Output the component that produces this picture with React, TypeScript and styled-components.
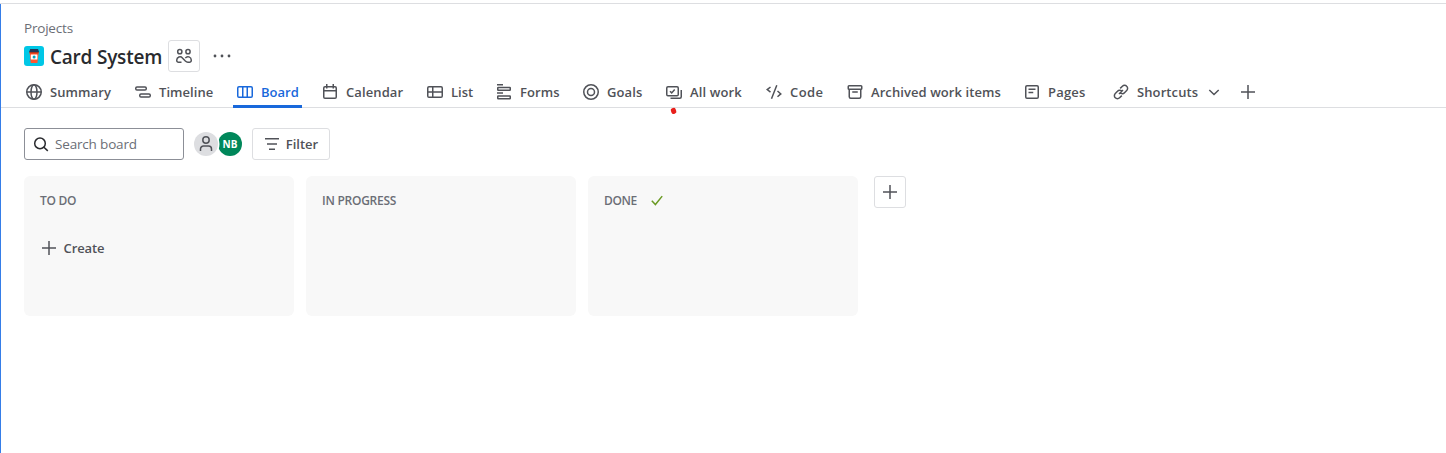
import React from "react";
import styled, { createGlobalStyle, css } from "styled-components";

const Global = createGlobalStyle`
  * { box-sizing: border-box; }
  html, body { margin: 0; padding: 0; background: #fff; }
  body { font-family: "Open Sans", "Noto Sans", sans-serif; color: #505258; overflow: hidden; }
`;

const Page = styled.div`
  height: 453px;
  padding-top: 3px;
`;

const Shell = styled.main`
  position: relative;
  height: 450px;
  border-top: 1px solid #dddee1;
  &::before {
    content: "";
    position: absolute;
    left: 0;
    top: 0;
    bottom: 0;
    width: 1px;
    background: #357de8;
  }
`;

const Text = styled.span<{ $w: number; $s?: number }>`
  display: block;
  flex: none;
  width: ${(p) => p.$w}px;
  letter-spacing: ${(p) => p.$s ?? 0}px;
  white-space: nowrap;
`;

const Header = styled.header`
  padding: 14px 24px 0;
`;

const Crumb = styled.div`
  font-size: 13.5px;
  line-height: 20px;
  height: 20px;
  color: #6b6e76;
`;

const TitleRow = styled.div`
  display: flex;
  align-items: center;
  height: 32px;
  margin-top: 2px;
`;

const Title = styled.h1`
  margin: 2px 6px 0;
  font-size: 19px;
  line-height: 24px;
  font-weight: 600;
  color: #292a2e;
`;

const iconButton = css`
  display: flex;
  align-items: center;
  justify-content: center;
  border: 1px solid #dddee1;
  border-radius: 3px;
  background: #fff;
  color: #505258;
  padding: 0;
`;

const SquareButton = styled.button`
  ${iconButton}
  width: 32px;
  height: 32px;
  flex: none;
`;

const MoreButton = styled.button`
  ${iconButton}
  border: 0;
  width: 24px;
  height: 32px;
  margin-left: 10px;
`;

const Tabs = styled.nav`
  display: flex;
  height: 32px;
  margin-top: 4px;
  padding-left: 22px;
  border-bottom: 1px solid #dddee1;
`;

const Tab = styled.a<{ $active?: boolean; $after?: number }>`
  position: relative;
  display: flex;
  align-items: center;
  gap: 8px;
  height: 32px;
  padding: 0 4px 0;
  margin-right: ${(p) => p.$after ?? 16}px;
  font-size: 13px;
  font-weight: 600;
  line-height: 20px;
  color: ${(p) => (p.$active ? "#1868db" : "#505258")};
  ${(p) =>
    p.$active &&
    css`
      &::after {
        content: "";
        position: absolute;
        left: 0;
        right: 0;
        bottom: 0;
        height: 3px;
        background: #1868db;
      }
    `}
`;

const RedMark = styled.i`
  position: absolute;
  left: 9px;
  top: 32px;
  width: 4.5px;
  height: 5.5px;
  border-radius: 2px;
  background: #e8201c;
  transform: rotate(-20deg);
`;

const Toolbar = styled.div`
  display: flex;
  align-items: center;
  height: 32px;
  margin: 20px 24px 0;
`;

const Search = styled.label`
  display: flex;
  align-items: center;
  gap: 6px;
  width: 160px;
  height: 32px;
  padding: 0 8px;
  border: 1px solid #8c8f97;
  border-radius: 3px;
  font-size: 13.5px;
  color: #6b6e76;
`;

const Avatars = styled.div`
  display: flex;
  margin: 0 10px;
`;

const Avatar = styled.span<{ $bg: string; $fg: string; $ring?: boolean }>`
  position: relative;
  z-index: ${(p) => (p.$ring ? 1 : 0)};
  display: flex;
  align-items: center;
  justify-content: center;
  width: 24px;
  height: 24px;
  border-radius: 50%;
  background: ${(p) => p.$bg};
  color: ${(p) => p.$fg};
  box-shadow: ${(p) => (p.$ring ? "0 0 0 1.5px #fff" : "none")};
  font-size: 10px;
  font-weight: 700;
`;

const FilterButton = styled.button`
  ${iconButton}
  justify-content: flex-start;
  gap: 5px;
  width: 78px;
  height: 32px;
  padding-left: 11px;
  font: 600 13px/20px "Open Sans", sans-serif;
`;

const Board = styled.section`
  display: flex;
  gap: 12px;
  margin: 16px 24px 0;
`;

const Column = styled.div`
  width: 270px;
  height: 140px;
  padding: 16px;
  border-radius: 6px;
  background: #f8f8f8;
`;

const ColumnTitle = styled.h2`
  display: flex;
  align-items: center;
  gap: 11px;
  margin: 0;
  height: 17px;
  font-size: 12px;
  font-weight: 600;
  line-height: 16px;
  color: #6b6e76;
`;

const Create = styled.button`
  display: flex;
  align-items: center;
  gap: 6px;
  margin: 28px 0 0 1px;
  padding: 0;
  height: 22px;
  border: 0;
  background: none;
  color: #505258;
  font: 600 13px/20px "Open Sans", sans-serif;
`;

const AddColumn = styled(SquareButton)`
  margin-left: 4px;
`;

const Svg = styled.svg`
  display: block;
  flex: none;
  fill: none;
  stroke: currentColor;
  stroke-width: 1.5;
`;

const Icon = ({ children, color }: { children: React.ReactNode; color?: string }) => (
  <Svg width="16" height="16" viewBox="0 0 16 16" color={color}>
    {children}
  </Svg>
);

const icons = {
  globe: (
    <>
      <circle cx="8" cy="8" r="7.25" />
      <ellipse cx="8" cy="8" rx="3" ry="7.25" />
      <path d="M.75 8h14.5" />
    </>
  ),
  timeline: (
    <>
      <rect x=".75" y="2.9" width="10.5" height="3.2" rx="1.25" />
      <rect x="4.75" y="9.9" width="10.5" height="3.2" rx="1.25" />
    </>
  ),
  board: (
    <>
      <rect x=".75" y="2.75" width="14.5" height="10.5" rx="1.25" />
      <path d="M5.75 3v10M10.25 3v10" />
    </>
  ),
  calendar: (
    <>
      <rect x="1.75" y="2.75" width="12.5" height="11.5" rx="1.25" />
      <path d="M2 6.75h12M4.75 0v4.5M11.25 0v4.5" />
    </>
  ),
  list: (
    <>
      <rect x=".75" y="2.75" width="14.5" height="10.5" rx="1.25" />
      <path d="M1 8h14M5.75 3v10" />
    </>
  ),
  forms: (
    <>
      <path d="M1 .75h6M1 9h6" />
      <rect x="1.75" y="3.5" width="12.5" height="2.75" rx=".5" />
      <rect x="1.75" y="11.9" width="12.5" height="2.75" rx=".5" />
    </>
  ),
  goals: (
    <>
      <circle cx="8" cy="8" r="7.25" />
      <circle cx="8" cy="8" r="3.5" />
    </>
  ),
  work: (
    <>
      <rect x=".75" y="2.75" width="11.5" height="9" rx="1.25" />
      <path d="M4 7.2l1.7 1.7 3-3.5M4.5 14.25h9.25c.8 0 1.5-.7 1.5-1.5V6" />
    </>
  ),
  code: <path d="M4.5 3L1.2 5.6l3.3 2.6M11.5 7l3.3 2.9-3.3 2.9M10.8 1.3L5.5 14.7" />,
  archive: (
    <>
      <rect x="1.25" y="1.75" width="13.5" height="3.5" rx=".75" />
      <path d="M2.25 5.5v7.25c0 .8.7 1.5 1.5 1.5h8.5c.8 0 1.5-.7 1.5-1.5V5.5M5.25 8h5.5" />
    </>
  ),
  pages: (
    <>
      <rect x="1.75" y="1.75" width="12.5" height="12.5" rx="1.25" />
      <path d="M4.5 5.25h7M4.5 8.5h4.75" />
    </>
  ),
  link: (
    <path d="M6 10l4-4M7.2 4.4l2.2-2.2a3 3 0 0 1 4.3 0 3 3 0 0 1 0 4.3L11.5 8.7a3 3 0 0 1-4.3.1M8.8 11.6l-2.2 2.2a3 3 0 0 1-4.3 0 3 3 0 0 1 0-4.3L4.5 7.3a3 3 0 0 1 4.3-.1" />
  ),
  plus: <path d="M8 1v14M1 8h14" />,
};

type TabDef = {
  label: string;
  icon: keyof typeof icons;
  w: number;
  s?: number;
  active?: boolean;
  mark?: boolean;
  after?: number;
};

const tabs: TabDef[] = [
  { label: "Summary", icon: "globe", w: 61, s: 0.1 },
  { label: "Timeline", icon: "timeline", w: 54, s: 0.05 },
  { label: "Board", icon: "board", w: 37, active: true },
  { label: "Calendar", icon: "calendar", w: 57, s: 0.1 },
  { label: "List", icon: "list", w: 21 },
  { label: "Forms", icon: "forms", w: 39, s: 0.12 },
  { label: "Goals", icon: "goals", w: 35, s: 0.1 },
  { label: "All work", icon: "work", w: 52, s: 0.12, mark: true },
  { label: "Code", icon: "code", w: 33, s: 0.4 },
  { label: "Archived work items", icon: "archive", w: 129, s: 0.08 },
  { label: "Pages", icon: "pages", w: 38, s: 0.2, after: 19 },
];

const CupLogo = () => (
  <svg width="20" height="20" viewBox="0 0 20 20">
    <rect width="20" height="20" rx="3" fill="#00c7e6" />
    <path d="M5.5 6h9.2l-1.3 11H6.8z" fill="#ff5630" />
    <path d="M5.5 6h9.2l-.2 1.6H5.7z" fill="#de350b" />
    <path d="M6.2 3h7.8l1.2 3.2H5z" fill="#253858" />
    <rect x="6.8" y="8.4" width="6.6" height="5.2" rx=".6" fill="#fff" />
    <circle cx="10.1" cy="11" r="1.5" fill="#00a3bf" />
  </svg>
);

export default function App() {
  return (
    <Page>
      <Global />
      <Shell>
        <Header>
          <Crumb>
            <Text $w={50} $s={-0.2}>
              Projects
            </Text>
          </Crumb>
          <TitleRow>
            <CupLogo />
            <Title>
              <Text $w={112} $s={-0.22}>
                Card System
              </Text>
            </Title>
            <SquareButton aria-label="Team">
              <Icon>
                <circle cx="3.8" cy="3.7" r="2.1" />
                <circle cx="12" cy="3.7" r="2.1" />
                <path d="M5.5 14.25H2.5A1.75 1.75 0 0 1 .75 12.5V12a3.25 3.25 0 0 1 5.7-2.1l2.9 3.1c.8.8 1.5 1.25 2.5 1.25h1.65a1.75 1.75 0 0 0 1.75-1.75V12a3.25 3.25 0 0 0-5.9-1.9" />
              </Icon>
            </SquareButton>
            <MoreButton aria-label="More">
              <svg width="18" height="4" viewBox="0 0 18 4" fill="#505258">
                <circle cx="2" cy="2" r="1.4" />
                <circle cx="9" cy="2" r="1.4" />
                <circle cx="16" cy="2" r="1.4" />
              </svg>
            </MoreButton>
          </TitleRow>
        </Header>
        <Tabs>
          {tabs.map((t) => (
            <Tab key={t.label} $active={t.active} $after={t.after}>
              <Icon>{icons[t.icon]}</Icon>
              <Text $w={t.w} $s={t.s}>
                {t.label}
              </Text>
              {t.mark && <RedMark />}
            </Tab>
          ))}
          <Tab $after={10}>
            <Icon>{icons.link}</Icon>
            <Text $w={61} $s={0.1}>
              Shortcuts
            </Text>
            <Icon>
              <path d="M3.3 6L8 10.5 12.7 6" />
            </Icon>
          </Tab>
          <Tab>
            <Icon>{icons.plus}</Icon>
          </Tab>
        </Tabs>
        <Toolbar>
          <Search>
            <Icon color="#292a2e">
              <circle cx="7" cy="7.4" r="5.3" />
              <path d="M10.9 11.2l3.9 3.7" />
            </Icon>
            <Text $w={84} $s={-0.17}>
              Search board
            </Text>
          </Search>
          <Avatars>
            <Avatar $bg="#dddee1" $fg="#505258" $ring>
              <Icon>
                <circle cx="8" cy="4" r="3.2" />
                <path d="M2.5 15v-2a3 3 0 0 1 3-3h5a3 3 0 0 1 3 3v2" />
              </Icon>
            </Avatar>
            <Avatar $bg="#00875a" $fg="#fff">
              NB
            </Avatar>
          </Avatars>
          <FilterButton>
            <Icon>
              <path d="M1 2.75h14M3 8h10M5 13.25h6" />
            </Icon>
            <Text $w={34}>Filter</Text>
          </FilterButton>
        </Toolbar>
        <Board>
          <Column>
            <ColumnTitle>
              <Text $w={37} $s={-0.3}>
                TO DO
              </Text>
            </ColumnTitle>
            <Create>
              <Icon>{icons.plus}</Icon>
              <Text $w={42} $s={-0.1}>
                Create
              </Text>
            </Create>
          </Column>
          <Column>
            <ColumnTitle>
              <Text $w={76} $s={-0.25}>
                IN PROGRESS
              </Text>
            </ColumnTitle>
          </Column>
          <Column>
            <ColumnTitle>
              <Text $w={34} $s={-0.4}>
                DONE
              </Text>
              <Icon color="#6a9a23">
                <path d="M2.8 7.8l3.6 3.7 6.8-8.4" />
              </Icon>
            </ColumnTitle>
          </Column>
          <AddColumn aria-label="Add column">
            <Icon>{icons.plus}</Icon>
          </AddColumn>
        </Board>
      </Shell>
    </Page>
  );
}
